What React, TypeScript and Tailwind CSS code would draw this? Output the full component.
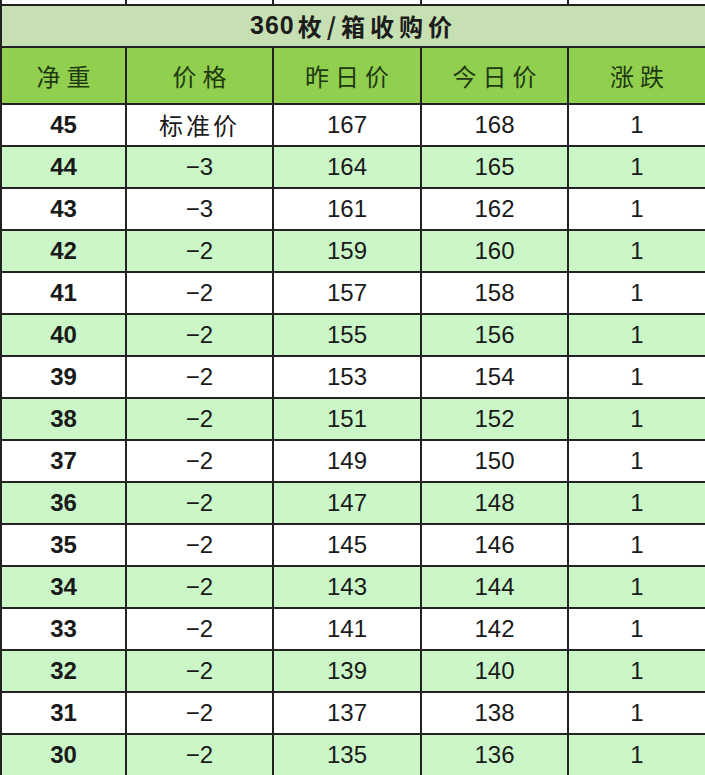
const rows: [number, string, number, number, number][] = [
  [45, '标准价', 167, 168, 1],
  [44, '−3', 164, 165, 1],
  [43, '−3', 161, 162, 1],
  [42, '−2', 159, 160, 1],
  [41, '−2', 157, 158, 1],
  [40, '−2', 155, 156, 1],
  [39, '−2', 153, 154, 1],
  [38, '−2', 151, 152, 1],
  [37, '−2', 149, 150, 1],
  [36, '−2', 147, 148, 1],
  [35, '−2', 145, 146, 1],
  [34, '−2', 143, 144, 1],
  [33, '−2', 141, 142, 1],
  [32, '−2', 139, 140, 1],
  [31, '−2', 137, 138, 1],
  [30, '−2', 135, 136, 1],
];

const widths = ['w-[125px]', 'w-[147px]', 'w-[148px]', 'w-[147px]', 'flex-1'];
const headers = ['净重', '价格', '昨日价', '今日价', '涨跌'];

const cjk = "font-['Noto_Sans_CJK_SC',sans-serif]";
const num = "font-['Liberation_Sans','Noto_Sans_CJK_SC',sans-serif]";

export default function App() {
  return (
    <div className="w-[705px] h-[775px] overflow-hidden bg-white text-[#1a1a1a]">
      {/* 上一行残留 */}
      <div className="flex h-[4px] border-l-2 border-[#222]">
        {widths.map((w, i) => (
          <div key={i} className={`${w} ${i < 4 ? 'border-r-2 border-[#222]' : ''}`} />
        ))}
      </div>

      {/* 标题 */}
      <div className={`h-[42px] border-t-2 border-l-2 border-[#222] bg-[#c6dfb3] flex items-center justify-center ${cjk} text-[24px] font-bold tracking-[5px] text-[#1c1c1c]`}>
        <span className={`${num} text-[25px] tracking-[1px] mr-[3px]`}>360</span>
        <span>枚/箱收购价</span>
      </div>

      {/* 表头 */}
      <div className="flex h-[57px] border-t-2 border-l-2 border-[#222] bg-[#91cf4e]">
        {headers.map((h, i) => (
          <div
            key={i}
            className={`${widths[i]} ${i < 4 ? 'border-r-2 border-[#222]' : ''} flex items-center justify-center ${cjk} text-[24px] tracking-[6px] pl-[6px] text-[#1f3a12]`}
          >
            {h}
          </div>
        ))}
      </div>

      {/* 数据 */}
      {rows.map((r, ri) => (
        <div
          key={ri}
          className={`flex h-[42px] border-t-2 border-l-2 border-[#222] ${ri % 2 === 1 ? 'bg-[#cbf7c8]' : 'bg-white'}`}
        >
          {r.map((v, i) => (
            <div
              key={i}
              className={`${widths[i]} ${i < 4 ? 'border-r-2 border-[#222]' : ''} flex items-center justify-center text-[24px] ${
                i === 1 && ri === 0 ? `${cjk} tracking-[3px]` : num
              } ${i === 0 ? 'font-bold' : ''}`}
            >
              {v}
            </div>
          ))}
        </div>
      ))}
    </div>
  );
}
